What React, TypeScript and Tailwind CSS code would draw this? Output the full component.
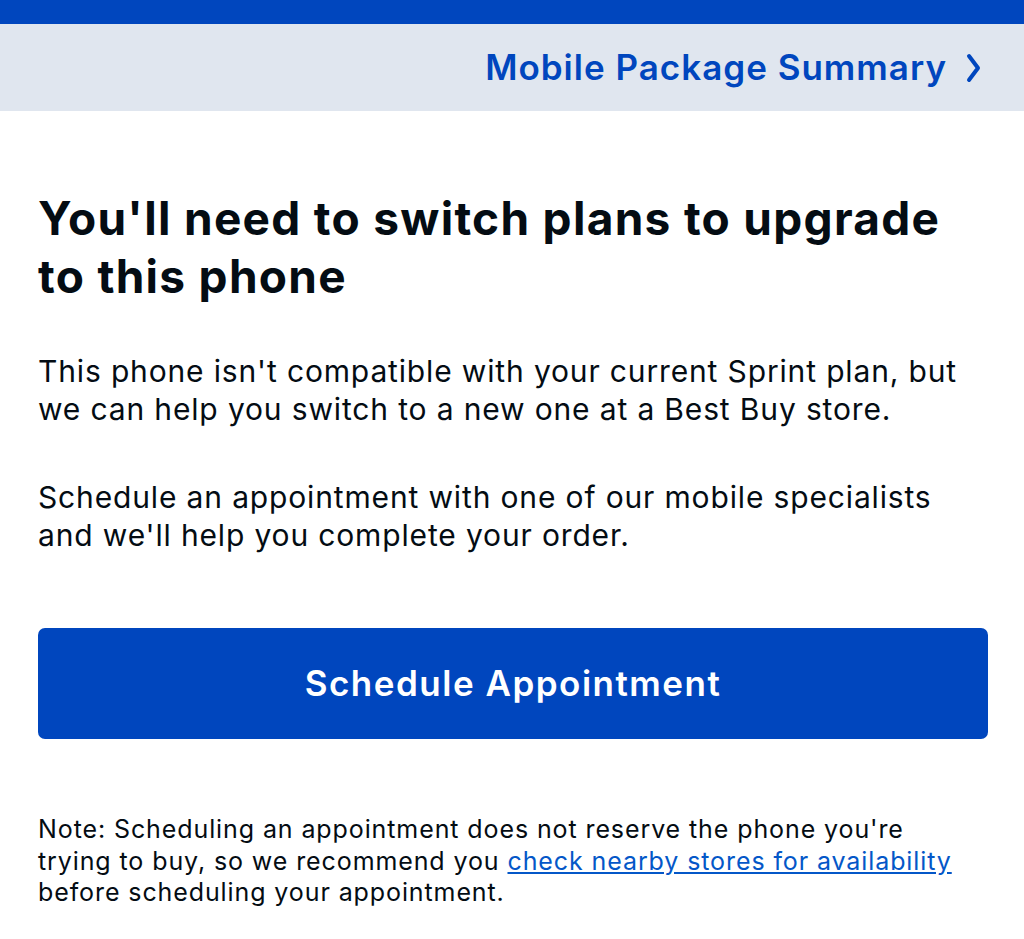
export default function App() {
  return (
    <div className="w-[1024px] h-[939px] bg-white overflow-hidden" style={{ fontFamily: "Inter, 'Liberation Sans', sans-serif" }}>
      <div className="h-[24px] bg-[#0046be]" />
      <div className="h-[87px] bg-[#e0e6ef] flex items-center justify-end pr-[42px]">
        <a className="flex items-center gap-[18px] text-[#0046be] font-semibold text-[35px] tracking-[1px]">
          <span>Mobile Package Summary</span>
          <svg width="17" height="30" viewBox="0 0 17 30" fill="none">
            <path d="M4 3 L13 15 L4 27" stroke="#0046be" strokeWidth="4" strokeLinecap="round" strokeLinejoin="round" />
          </svg>
        </a>
      </div>
      <div className="px-[38px]">
        <h1 className="mt-[78px] text-[#040c13] font-bold text-[46px] leading-[58px] tracking-[1.3px]">
          You'll need to switch plans to upgrade<br />to this phone
        </h1>
        <p className="mt-[47px] text-[#040c13] text-[30px] leading-[38px] tracking-[0.85px]">
          This phone isn't compatible with your current Sprint plan, but<br />we can help you switch to a new one at a Best Buy store.
        </p>
        <p className="mt-[50px] text-[#040c13] text-[30px] leading-[38px] tracking-[0.85px]">
          Schedule an appointment with one of our mobile specialists<br />and we'll help you complete your order.
        </p>
        <button className="mt-[74px] w-[950px] h-[111px] rounded-[7px] bg-[#0046be] text-white font-semibold text-[35px] tracking-[1.5px]">
          Schedule Appointment
        </button>
        <p className="mt-[75px] text-[#040c13] text-[25px] leading-[31.5px] tracking-[0.9px]">
          Note: Scheduling an appointment does not reserve the phone you're<br />trying to buy, so we recommend you{" "}
          <a className="text-[#0457c8] underline">check nearby stores for availability</a>
          <br />before scheduling your appointment.
        </p>
      </div>
    </div>
  );
}
